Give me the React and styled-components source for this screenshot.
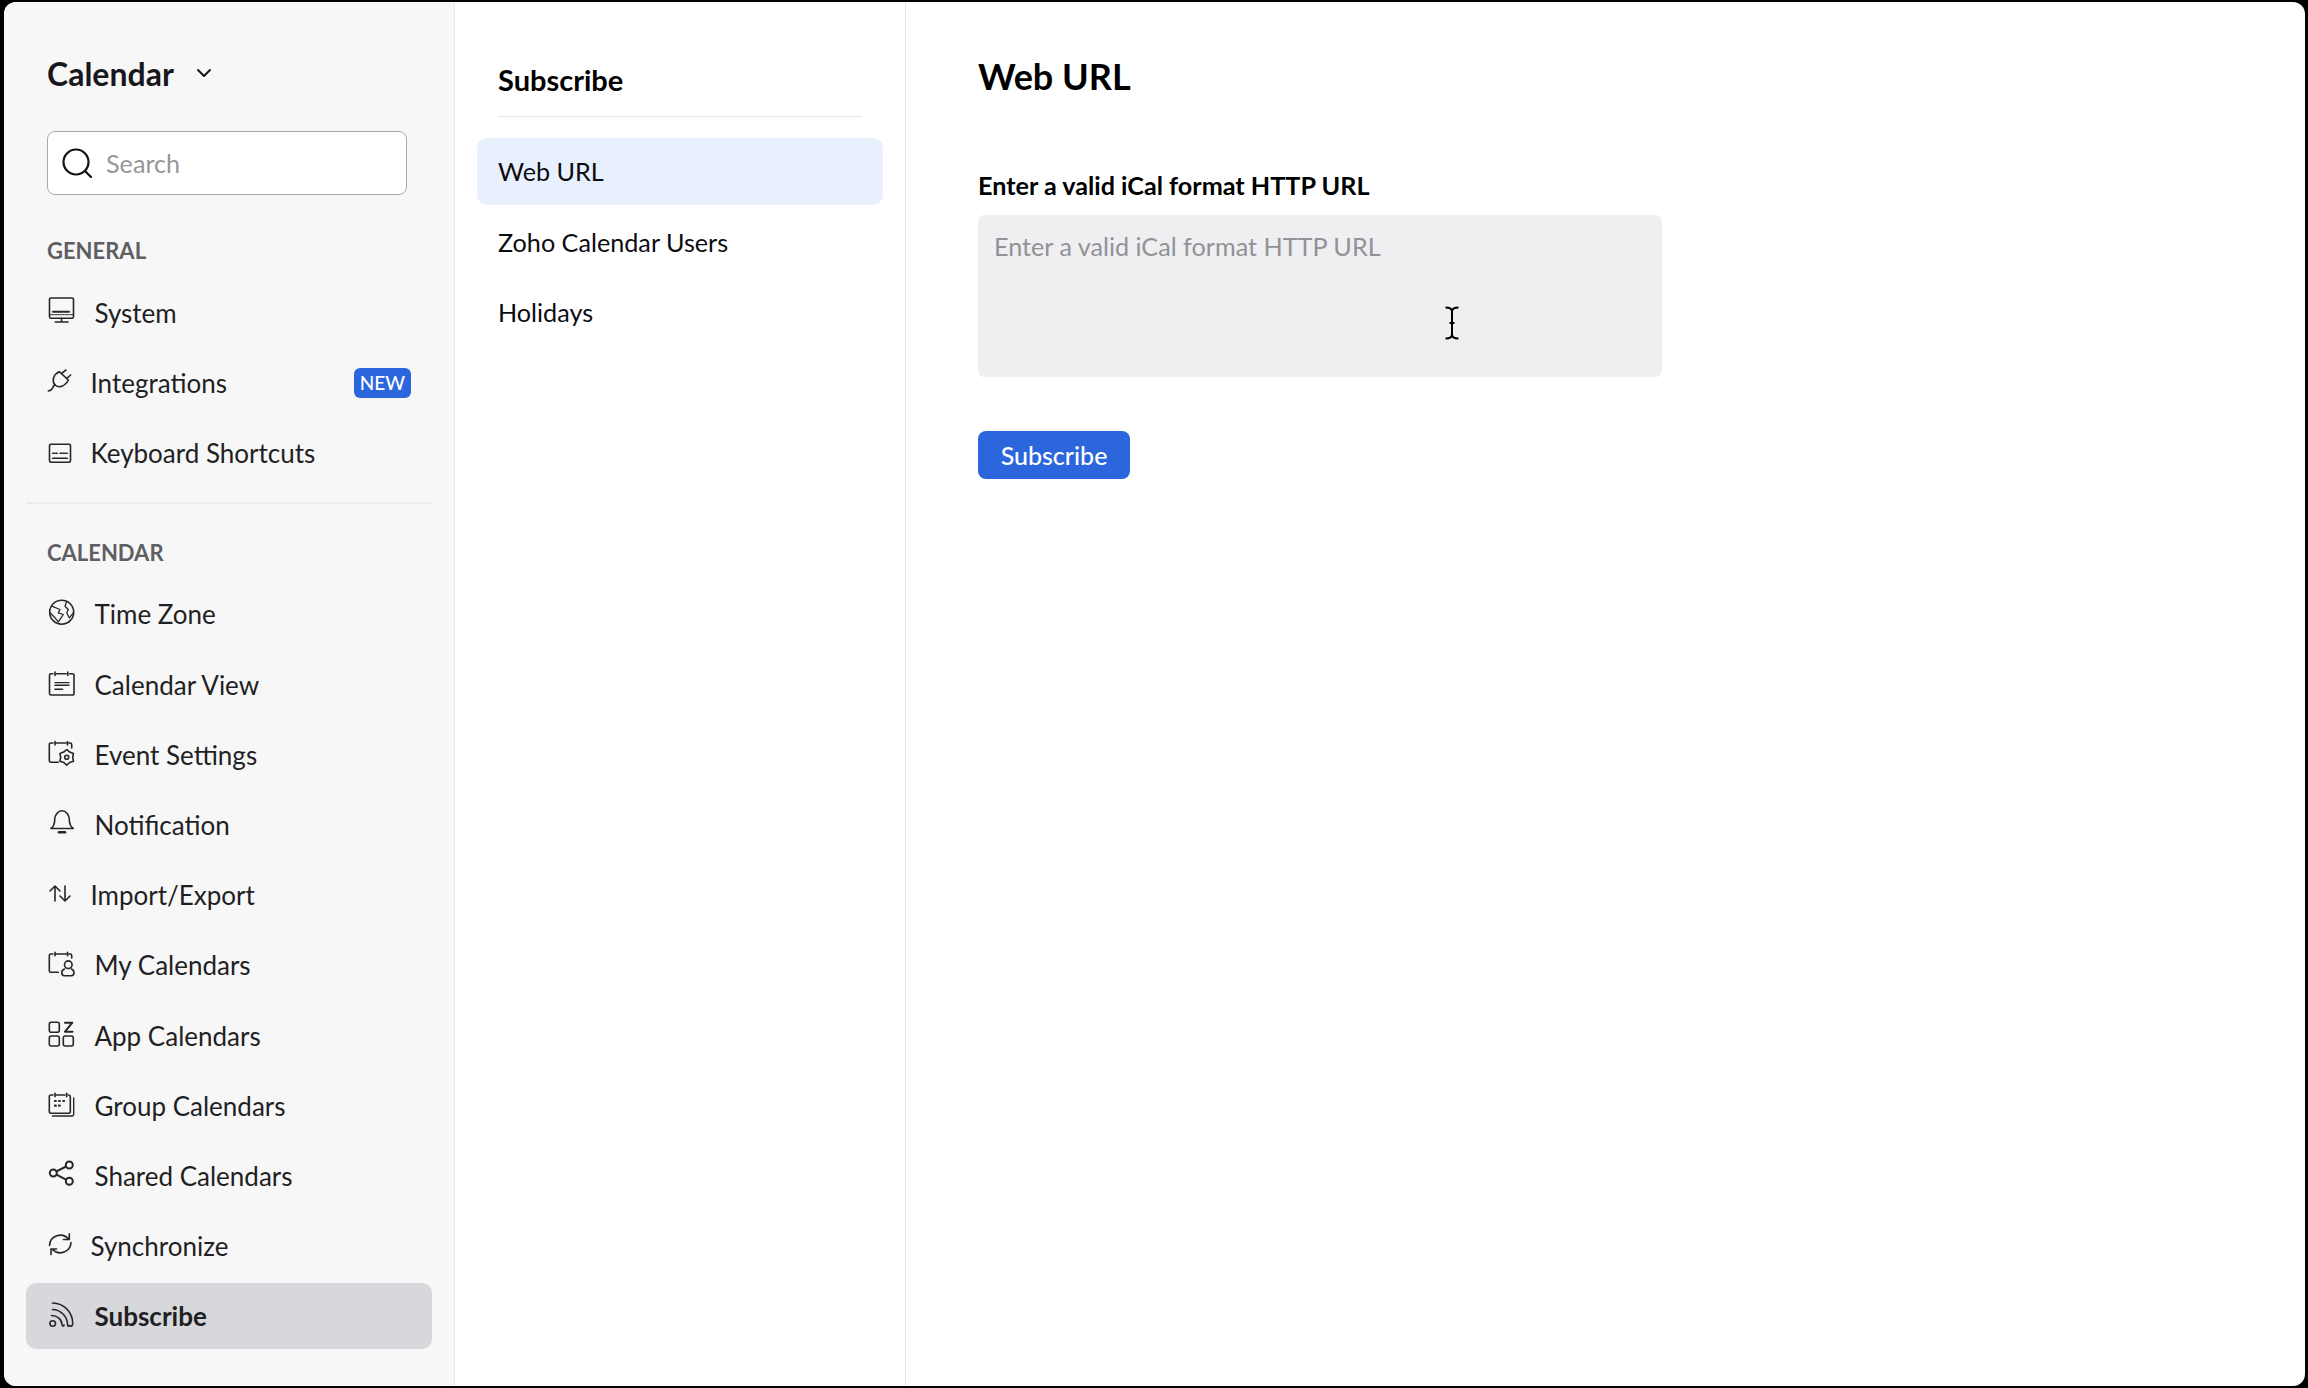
import React from 'react';
import styled, { createGlobalStyle } from 'styled-components';

const GlobalStyle = createGlobalStyle`
  html, body {
    margin: 0;
    padding: 0;
    background: #000;
    font-family: 'Lato', 'Open Sans', sans-serif;
  }
  * {
    box-sizing: border-box;
  }
`;

const Frame = styled.div`
  width: 2308px;
  height: 1388px;
  padding: 2px 3px 2px 4px;
  background: #000;
`;

const Window = styled.div`
  display: flex;
  height: 100%;
  border-radius: 12px;
  overflow: hidden;
  background: #fff;
`;

const Sidebar = styled.aside`
  width: 451px;
  flex-shrink: 0;
  padding: 0 22px;
  background: #f7f7f8;
  border-right: 1px solid #e7e7e9;
`;

const AppTitle = styled.div`
  display: flex;
  align-items: center;
  height: 56px;
  margin: 43px 0 30px 21px;
  font-size: 32px;
  font-weight: 700;
  color: #17171c;
`;

const Chevron = styled.svg`
  margin-left: 22px;
`;

const SearchBox = styled.label`
  display: flex;
  align-items: center;
  width: 360px;
  height: 64px;
  margin-left: 21px;
  padding-left: 14px;
  gap: 12px;
  background: #fff;
  border: 1px solid #a9a9ad;
  border-radius: 8px;
`;

const SearchInput = styled.input`
  flex: 1;
  min-width: 0;
  border: none;
  outline: none;
  background: transparent;
  font: 400 25.2px 'Lato', sans-serif;
  color: #17171c;
  &::placeholder {
    color: #97979b;
    opacity: 1;
  }
`;

const SectionLabel = styled.div`
  height: 28px;
  line-height: 28px;
  margin-left: 21px;
  font-size: 22px;
  font-weight: 700;
  color: #5e5e63;
`;

const GeneralLabel = styled(SectionLabel)`
  margin-top: 42px;
  margin-bottom: 15px;
`;

const CalendarLabel = styled(SectionLabel)`
  margin-top: 35px;
  margin-bottom: 14px;
`;

const NavList = styled.nav`
  display: flex;
  flex-direction: column;
  gap: 4.2px;
`;

const NavRow = styled.div`
  display: flex;
  align-items: center;
  height: 66px;
  padding-left: 23px;
  padding-right: 21px;
  border-radius: 10px;
  font-size: 26px;
  color: #1f1f24;
  background: ${p => (p.$active ? '#d7d8dc' : 'transparent')};
  font-weight: ${p => (p.$active ? 700 : 400)};
`;

const NavIcon = styled.svg`
  flex-shrink: 0;
  overflow: visible;
  margin-right: ${p => (p.$narrow ? '16px' : '20px')};
  margin-left: -0.5px;
  fill: none;
  stroke: #26262b;
  stroke-width: 1.6;
  stroke-linecap: round;
  stroke-linejoin: round;
`;

const NewBadge = styled.span`
  margin-left: auto;
  padding: 0 6px;
  height: 30px;
  line-height: 30px;
  border-radius: 6px;
  background: #2c66dd;
  color: #fff;
  font-size: 19px;
  font-weight: 500;
`;

const Divider = styled.div`
  height: 2px;
  margin-top: 16px;
  background: #ebebed;
`;

const SubNav = styled.section`
  width: 451px;
  flex-shrink: 0;
  padding: 0 22px;
  border-right: 1px solid #e7e7e9;
`;

const SubNavTitle = styled.h2`
  height: 115px;
  margin: 0 21px 21px;
  padding-top: 58px;
  line-height: 40px;
  font-size: 29px;
  font-weight: 700;
  color: #000;
  border-bottom: 1px solid #e7e7e9;
`;

const SubNavList = styled.div`
  display: flex;
  flex-direction: column;
  gap: 4px;
`;

const SubNavRow = styled.div`
  display: flex;
  align-items: center;
  height: 66.5px;
  padding-left: 21px;
  border-radius: 10px;
  font-size: 25.2px;
  color: #0c0c10;
  background: ${p => (p.$active ? '#e9f0fd' : 'transparent')};
`;

const Content = styled.main`
  flex: 1;
  padding: 49px 0 0 72px;
`;

const PageTitle = styled.h1`
  margin: 0;
  height: 50px;
  line-height: 50px;
  font-size: 36px;
  font-weight: 700;
  color: #000;
`;

const FieldLabel = styled.div`
  margin-top: 67px;
  height: 34px;
  line-height: 34px;
  font-size: 25.2px;
  font-weight: 700;
  color: #000;
`;

const FieldWrap = styled.div`
  position: relative;
  width: 684px;
  height: 162px;
  margin-top: 13px;
`;

const UrlField = styled.textarea`
  display: block;
  width: 100%;
  height: 100%;
  padding: 13px 16px;
  border: none;
  outline: none;
  resize: none;
  border-radius: 6px;
  background: #efeff1;
  font: 400 25.2px/36px 'Lato', sans-serif;
  &::placeholder {
    color: #929296;
    opacity: 1;
  }
`;

const TextCursor = styled.svg`
  position: absolute;
  left: 466px;
  top: 91px;
`;

const SubscribeButton = styled.button`
  display: block;
  width: 152px;
  height: 48px;
  margin-top: 54px;
  padding: 0;
  border: none;
  border-radius: 8px;
  background: #2c66dd;
  color: #fff;
  font: 500 25px 'Lato', sans-serif;
`;

// 12 point outline for the small gear of the event settings icon
const gearPoints = (cx, cy, outer, inner) =>
  Array.from({ length: 12 }, (_, i) => {
    const r = i % 2 === 0 ? outer : inner;
    const a = (Math.PI / 6) * i - Math.PI / 2;
    return `${(cx + r * Math.cos(a)).toFixed(2)},${(cy + r * Math.sin(a)).toFixed(2)}`;
  }).join(' ');

const icons = {
  system: (
    <>
      <rect x="0.5" y="-2" width="24" height="20.3" rx="1.5" />
      <path d="M4 11.7h16" strokeWidth="2" />
      <path d="M1 14.7h23" strokeWidth="1" strokeDasharray="1.5 1" />
      <path d="M12.5 18.3V22M6.3 22h12.7" />
    </>
  ),
  plug: (
    <>
      <path d="M10.3 1.7 19.3 10C16.5 16 9.5 19 5.5 14.5 2.5 10 5 4 10.3 1.7z" />
      <path d="M12.7 3.3 17 0M17.7 8.3 21.7 5M6 14.5c-1.5 1-1.8 2.3-2.3 3.3-.6 1.3-2.3 2.7-4.3 3.2" />
    </>
  ),
  keyboard: (
    <>
      <rect x="0.5" y="4.3" width="21" height="18" rx="1.5" />
      <path d="M3.7 13.3h4.6M11 13.3h7.3" strokeWidth="1.5" strokeDasharray="2 1.2" />
      <path d="M3.7 18.3h14.6" />
    </>
  ),
  globe: (
    <>
      <circle cx="12.7" cy="11.2" r="12" />
      <path d="M2.7 5.2 11 8.500 9.300 11.800 14.300 13.500 9.300 20.800 6 16.800 1 11.800" strokeWidth="1.300" />
      <path d="M17.700.2 16 5.200 19.300 8.500 17.700 11.800 20.300 16.800 24.300 11.800" strokeWidth="1.300" />
    </>
  ),
  calendarView: (
    <>
      <path d="M4 1.700H2A1.500 1.500 0 0 0 .5 3.200V21.500A1.500 1.500 0 0 0 2 23H23.500A1.500 1.500 0 0 0 25 21.500V3.200A1.500 1.500 0 0 0 23.500 1.700H20.500M7.500 1.700H17M6 0V3.500M18.700 0V3.500" />
      <path d="M6 10.700H20" strokeWidth="1.200" />
      <path d="M6 13.200H20M6 17.300H13.500" />
    </>
  ),
  eventSettings: (
    <>
      <path d="M4 1H1.800A1.500 1.500 0 0 0 .3 2.500V18.800A1.500 1.500 0 0 0 1.800 20.300H9.300M7 1H17M6 -.5V3M18.500 -.5V3M20 1H21.200A1.500 1.500 0 0 1 22.700 2.500V6" />
      <polygon points={gearPoints(17.7, 15.3, 7.8, 6)} />
      <circle cx="17.7" cy="15.3" r="2" />
    </>
  ),
  bell: (
    <>
      <path d="M2 16.500H24.300C21.300 14.500 20.300 11.500 20.300 7.500 20.300 3 17 -1.300 13 -1.300S5.700 3 5.700 7.500C5.700 11.500 4.700 14.500 2 16.500Z" />
      <path d="M10 20.300H16" strokeWidth="2.600" />
    </>
  ),
  arrows: (
    <>
      <path d="M6 19V4M1 9 6 4 11 9" />
      <path d="M16 4V19M11 14 16 19 21 14" />
    </>
  ),
  myCalendars: (
    <>
      <path d="M4 2H1.800A1.500 1.500 0 0 0 .3 3.500V18.800A1.500 1.500 0 0 0 1.800 20.300H9.300M7 2H17M6 .3V3.700M18.500 .3V3.700M20 2H21.200A1.500 1.500 0 0 1 22.700 3.500V6" />
      <circle cx="19.3" cy="12.7" r="3.8" />
      <path d="M15.500 17C13.500 17.800 12.700 19.300 12.700 20.800 12.700 22.700 14 23.700 15.500 23.700H22.300C24 23.700 25 22.700 25 20.800 25 19.300 24.300 17.800 22.500 17" />
    </>
  ),
  apps: (
    <>
      <rect x="0.3" y="-0.7" width="10" height="10" rx="2" />
      <rect x="0.3" y="13" width="10" height="10" rx="2" />
      <rect x="14.3" y="13" width="10" height="10" rx="2" />
      <path d="M16 -.300H23.300L16 8.700H23.500" strokeWidth="2" />
    </>
  ),
  group: (
    <>
      <path d="M4 2H2A1.700 1.700 0 0 0 .3 3.700V18.600A1.700 1.700 0 0 0 2 20.300H19.600A1.700 1.700 0 0 0 21.300 18.600V3.700A1.700 1.700 0 0 0 19.600 2H19.500M7.500 2H16M6 .3V3.700M17.700 .3V3.700" />
      <path d="M24.700 5V21.300A1.700 1.700 0 0 1 23 23H3.500" strokeWidth="1.400" strokeDasharray="1.500 .5" />
      <path d="M6 8H6.800M10 8H10.800M14.300 8H15.100M6 12.700H6.800M10 12.700H10.800" strokeWidth="2.200" />
    </>
  ),
  share: (
    <>
      <circle cx="4.3" cy="10" r="3.5" strokeWidth="2" />
      <circle cx="20.3" cy="2" r="3.5" strokeWidth="2" />
      <circle cx="20.3" cy="18.3" r="3.5" strokeWidth="2" />
      <path d="M7.500 8.300 17 3.500M7.500 11.700 17 16.700" strokeWidth="2" />
    </>
  ),
  sync: (
    <>
      <path d="M.5 12.500A10.800 10.800 0 0 1 19.500 6M20.300 .8V6.500H14.500" />
      <path d="M22 9.500A10.800 10.800 0 0 1 3.500 16.500M2 21.500V16H7.500" />
    </>
  ),
  rss: (
    <>
      <circle cx="3.7" cy="20.5" r="2.8" />
      <path d="M2.500 12.500C8 12.500 13 16.500 13 21.500 13 23.200 15 23.700 15 22" />
      <path d="M3.500 6.500C11.500 6.500 18.500 13.500 18.500 21.500 18.500 23.200 20.300 24 20.300 22.500" />
      <path d="M3.500 0C15.500 0 23.700 10 23.700 20.500 23.700 23 21.700 24 21 22.500" />
    </>
  ),
};

const generalItems = [
  { icon: 'system', label: 'System' },
  { icon: 'plug', label: 'Integrations', narrow: true, badge: 'NEW' },
  { icon: 'keyboard', label: 'Keyboard Shortcuts', narrow: true },
];

const calendarItems = [
  { icon: 'globe', label: 'Time Zone' },
  { icon: 'calendarView', label: 'Calendar View' },
  { icon: 'eventSettings', label: 'Event Settings' },
  { icon: 'bell', label: 'Notification' },
  { icon: 'arrows', label: 'Import/Export', narrow: true },
  { icon: 'myCalendars', label: 'My Calendars' },
  { icon: 'apps', label: 'App Calendars' },
  { icon: 'group', label: 'Group Calendars' },
  { icon: 'share', label: 'Shared Calendars' },
  { icon: 'sync', label: 'Synchronize', narrow: true },
  { icon: 'rss', label: 'Subscribe', active: true },
];

const NavItem = ({ item }) => (
  <NavRow $active={item.active}>
    <NavIcon $narrow={item.narrow} width="26" height="26" viewBox="0 0 26 26">
      {icons[item.icon]}
    </NavIcon>
    {item.label}
    {item.badge && <NewBadge>{item.badge}</NewBadge>}
  </NavRow>
);

const App = () => (
  <Frame>
    <GlobalStyle />
    <Window>
      <Sidebar>
        <AppTitle>
          Calendar
          <Chevron width="16" height="10" viewBox="0 0 16 10" fill="none" stroke="#17171c" strokeWidth="2" strokeLinecap="round" strokeLinejoin="round">
            <path d="m2 2 6 6 6-6" />
          </Chevron>
        </AppTitle>
        <SearchBox>
          <svg width="30" height="30" viewBox="0 0 30 30" fill="none" stroke="#111" strokeWidth="2.2" strokeLinecap="round">
            <circle cx="14" cy="14" r="12.5" />
            <path d="m23 23 6 6" />
          </svg>
          <SearchInput placeholder="Search" />
        </SearchBox>
        <GeneralLabel>GENERAL</GeneralLabel>
        <NavList>
          {generalItems.map(item => (
            <NavItem key={item.label} item={item} />
          ))}
        </NavList>
        <Divider />
        <CalendarLabel>CALENDAR</CalendarLabel>
        <NavList>
          {calendarItems.map(item => (
            <NavItem key={item.label} item={item} />
          ))}
        </NavList>
      </Sidebar>
      <SubNav>
        <SubNavTitle>Subscribe</SubNavTitle>
        <SubNavList>
          <SubNavRow $active>Web URL</SubNavRow>
          <SubNavRow>Zoho Calendar Users</SubNavRow>
          <SubNavRow>Holidays</SubNavRow>
        </SubNavList>
      </SubNav>
      <Content>
        <PageTitle>Web URL</PageTitle>
        <FieldLabel>Enter a valid iCal format HTTP URL</FieldLabel>
        <FieldWrap>
          <UrlField placeholder="Enter a valid iCal format HTTP URL" />
          <TextCursor width="16" height="34" viewBox="0 0 16 34" fill="none" stroke="#000" strokeWidth="2">
            <path d="M1.5 1.5c3.5 0 6.5 1 6.5 4v23c0 3-3 4-6.5 4M14.500 1.500c-3.500 0-6.500 1-6.500 4M14.500 32.500c-3.500 0-6.500-1-6.500-4M5.500 17h5" />
          </TextCursor>
        </FieldWrap>
        <SubscribeButton>Subscribe</SubscribeButton>
      </Content>
    </Window>
  </Frame>
);

export default App;
